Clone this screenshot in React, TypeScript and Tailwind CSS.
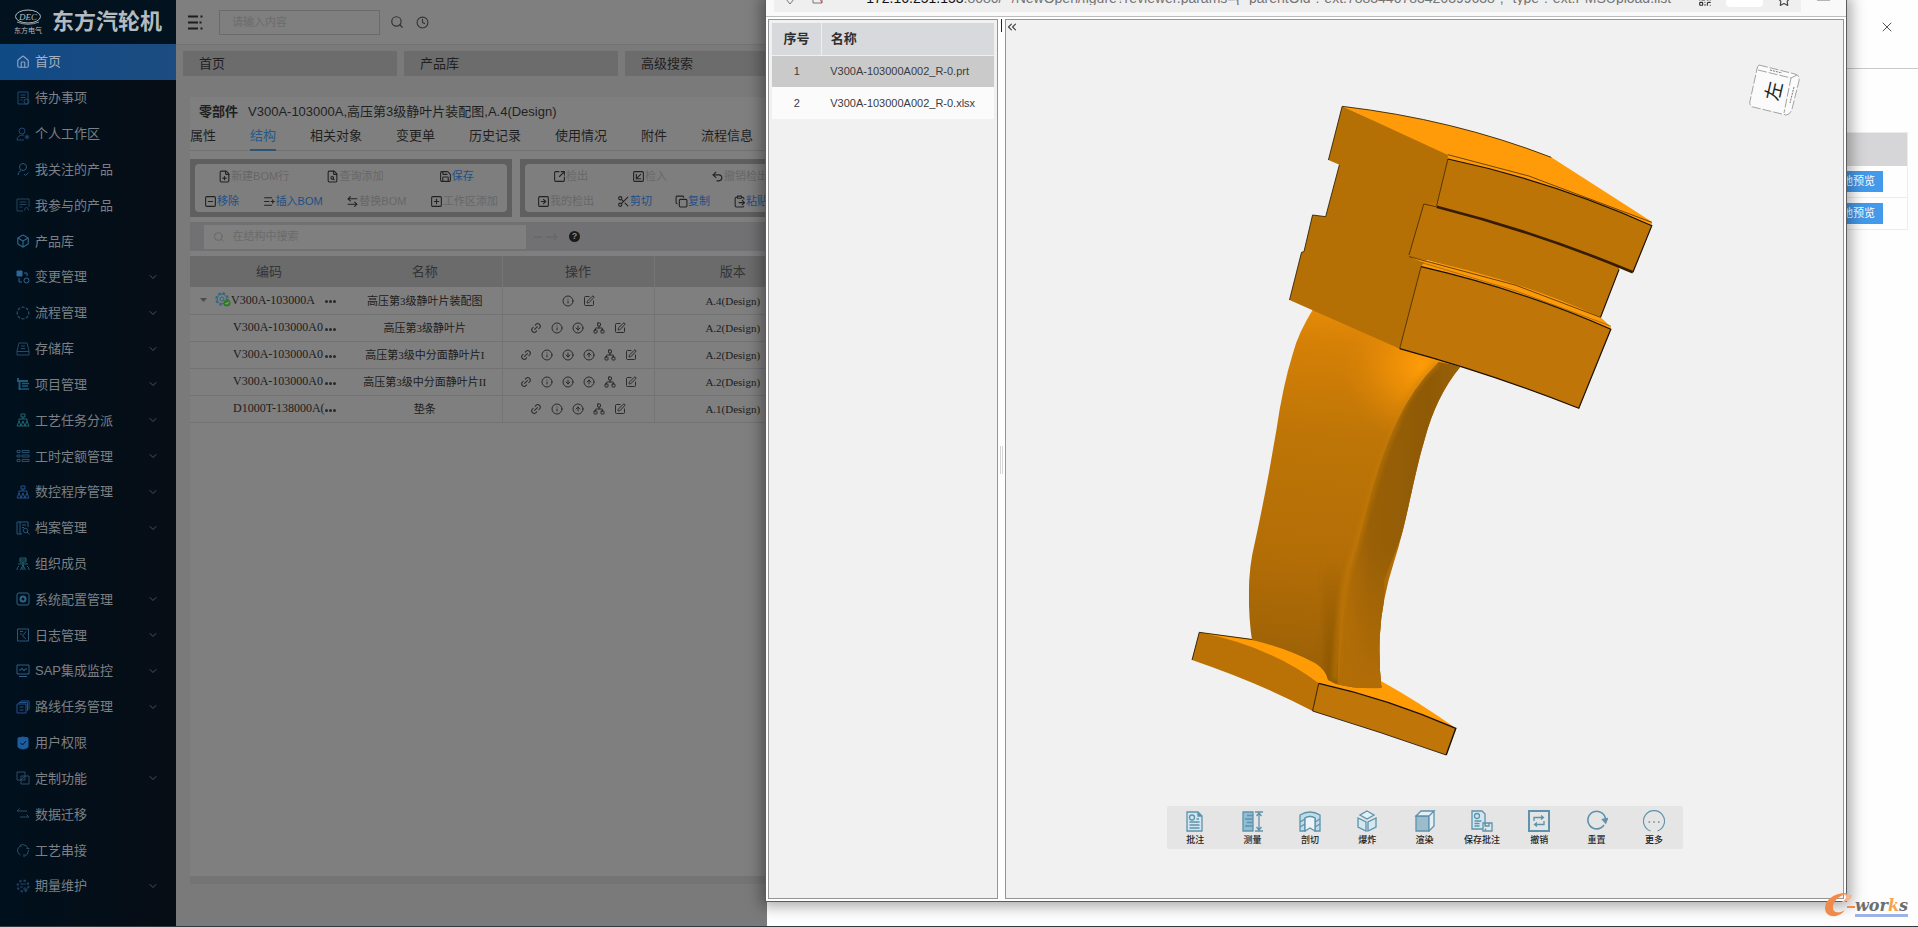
import React, { useState } from 'react';
import {
  ArrowLeftRight, Box, ChevronDown, ChevronsLeft, CircleArrowDown, CircleArrowUp, CircleDashed, ClipboardPaste,
  Clock4, Copy, FilePlus, FileSearch, House, Info, Link2, ListPlus, Network, QrCode, Save, Scissors, Search,
  SquareArrowDownLeft, SquareArrowOutUpRight, SquareArrowRight, SquareMinus, SquarePen, SquarePlus, Star, Undo2, X,
  type LucideIcon,
} from 'lucide-react';

interface MenuItem {
  label: string;
  icon?: LucideIcon;
  art?: React.ReactNode;
  tone: string;
  expandable?: boolean;
}

const orgArt = (
  <>
    <path d="M5 1h4v3H5zM7 4v2M3 8V6h8v2" />
    <path d="M3 8L1 13h4zM7 8l-2 5h4zM11 8l-2 5h4z" />
  </>
);

const menu: MenuItem[] = [
  { label: '首页', icon: House, tone: 'text-[#8aa3bd]' },
  { label: '待办事项', art: <><path d="M2 1h10v12H2zM4.500 4h5M4.500 6.500h5M4.500 9h2" /><circle cx="10.500" cy="10.500" r="2.500" /></>, tone: 'text-[#1f4d70]' },
  { label: '个人工作区', art: <><circle cx="6" cy="4" r="3" /><path d="M8 8Q1 8 1 13h7M11 7.500v5M8.500 10h5M9.500 8.500l3 3M12.500 8.500l-3 3" /></>, tone: 'text-[#23466f]' },
  { label: '我关注的产品', art: <><circle cx="7" cy="5" r="3.500" /><path d="M5 8.500Q2 10 2 13M8 12l1.500 1.500 3-3" /></>, tone: 'text-[#2c5474]' },
  { label: '我参与的产品', art: <path d="M1 1h12v8M1 1v12h6M3.500 4h7M3.500 6.500h7M3.500 9h3M8.500 12.500q0-3 2-3t2 3" />, tone: 'text-[#22425e]' },
  { label: '产品库', icon: Box, tone: 'text-[#2e6588]' },
  { label: '变更管理', art: <><path d="M1 1h5v5H1z" fill="currentColor" /><path d="M8 3h3v3M3 8v4h3" /><circle cx="10.500" cy="10.500" r="2.500" /></>, tone: 'text-[#2d6796]', expandable: true },
  { label: '流程管理', icon: CircleDashed, tone: 'text-[#2e5067]', expandable: true },
  { label: '存储库', art: <path d="M3 1h8l2 8v4H1V9zM1 9.500h12M5 4h4M5 6.500h4" />, tone: 'text-[#23496b]', expandable: true },
  { label: '项目管理', art: <><path d="M2 1v3h10M3.500 4v8h2" strokeWidth="2" /><path d="M6 6.500h7M6 9h6M6 12h7" strokeWidth="1.600" /></>, tone: 'text-[#1b5a78]', expandable: true },
  { label: '工艺任务分派', art: orgArt, tone: 'text-[#1e6672]', expandable: true },
  { label: '工时定额管理', art: <path d="M1 1.500h3v2H1zM1 6h3v2H1zM1 10.500h3v2H1zM6 1.500h7v2H6zM6 6h7v2H6zM6 10.500h7v2H6z" />, tone: 'text-[#24506c]', expandable: true },
  { label: '数控程序管理', art: orgArt, tone: 'text-[#24508c]', expandable: true },
  { label: '档案管理', art: <><path d="M1 13V1h11v5M1 13h5M4 1v12M6 4h4M6 6.500h2" /><circle cx="9.500" cy="9.500" r="2.200" /><path d="M11 11l2.500 2.500" /></>, tone: 'text-[#24587c]', expandable: true },
  { label: '组织成员', art: <path d="M4 1h6v4H4zM4 3h6M7 5v8M2 7h10M3 9Q1 10 1 13M11 9q2 1 2 4M4.500 13L7 8l2.500 5" />, tone: 'text-[#256272]' },
  { label: '系统配置管理', art: <><rect x="1" y="1" width="12" height="12" rx="2" /><circle cx="7" cy="7" r="2.500" strokeWidth="2" /></>, tone: 'text-[#2b6684]', expandable: true },
  { label: '日志管理', art: <path d="M1.500 1h11v12h-11zM4 3.500h3M4 6h2M10 3.500L6.500 8l3.500 3" />, tone: 'text-[#24587c]', expandable: true },
  { label: 'SAP集成监控', art: <path d="M1 1h12v9H1zM3 6h2l1-2 2 3 1-2h2M3 12.500h8" />, tone: 'text-[#2d5f86]', expandable: true },
  { label: '路线任务管理', art: <path d="M1 4h9v9H1zM3 4V2.500h8.500V11M5 2.500V1h8v8.500M3.500 7h4M3.500 10h4" />, tone: 'text-[#234f8c]', expandable: true },
  { label: '用户权限', art: <><path d="M2 2l5-1 5 1v9q-2 2-5 2t-5-2z" fill="currentColor" /><path d="M4.500 7l2 2 3.500-4" stroke="#06111c" /></>, tone: 'text-[#1c5ca0]' },
  { label: '定制功能', art: <path d="M1 1h8v8H1zM5 5h8v8H5zM5 9l4-4" />, tone: 'text-[#2b4d66]', expandable: true },
  { label: '数据迁移', art: <path d="M3.500 1.500L1 4h10M10.500 7.500L13 10H4" />, tone: 'text-[#2b4d66]' },
  { label: '工艺串接', art: <><path d="M4.500 12Q1 10 1.500 7T5 2.500M6 1.500q5 0 6 4M12.500 7q0 5-4 6M5 1v3M10.500 5.500h3M8 11v3" /></>, tone: 'text-[#2b4d66]' },
  { label: '期量维护', art: <><circle cx="7" cy="7" r="5.500" strokeWidth="2" strokeDasharray="2.300 2" /><path d="M4 5h6M4 8h3M9 8v4M7 10h5" /></>, tone: 'text-[#234066]', expandable: true },
];

const pageTabs = ['首页', '产品库', '高级搜索'];
const detailTabs = ['属性', '结构', '相关对象', '变更单', '历史记录', '使用情况', '附件', '流程信息'];

const actionIcons: Record<string, { icon: LucideIcon; name: string; className: string }> = {
  link: { icon: Link2, name: '关联', className: 'size-3 -rotate-45' },
  info: { icon: Info, name: '详情', className: 'size-3' },
  down: { icon: CircleArrowDown, name: '检出', className: 'size-3' },
  up: { icon: CircleArrowUp, name: '检入', className: 'size-3' },
  tree: { icon: Network, name: '结构', className: 'size-3' },
  edit: { icon: SquarePen, name: '编辑', className: 'size-3' },
};

const parts = [
  { code: 'V300A-103000A', name: '高压第3级静叶片装配图', version: 'A.4(Design)', actions: ['info', 'edit'], root: true },
  { code: 'V300A-103000A0', name: '高压第3级静叶片', version: 'A.2(Design)', actions: ['link', 'info', 'down', 'tree', 'edit'] },
  { code: 'V300A-103000A0', name: '高压第3级中分面静叶片I', version: 'A.2(Design)', actions: ['link', 'info', 'down', 'up', 'tree', 'edit'] },
  { code: 'V300A-103000A0', name: '高压第3级中分面静叶片II', version: 'A.2(Design)', actions: ['link', 'info', 'down', 'up', 'tree', 'edit'] },
  { code: 'D1000T-138000A(', name: '垫条', version: 'A.1(Design)', actions: ['link', 'info', 'up', 'tree', 'edit'] },
];

const files = ['V300A-103000A002_R-0.prt', 'V300A-103000A002_R-0.xlsx'];

const Sidebar: React.FC = () => (
  <aside className="flex w-[176px] shrink-0 flex-col bg-linear-to-r from-[#00101d] to-[#070d15] pb-[22px]">
    <div className="flex h-11 shrink-0 items-center gap-2 bg-[#02131f] pl-[14px] text-[#b4babf]">
      <svg width="30" height="26" viewBox="0 0 30 26" fill="none" stroke="currentColor">
        <ellipse cx="14" cy="7.500" rx="12.500" ry="6.500" />
        <path d="M3 13Q14 17.500 25 13" strokeWidth="0.800" />
        <text x="14" y="11" fontSize="9" fontStyle="italic" textAnchor="middle" fill="currentColor" stroke="none" fontFamily="Liberation Serif, serif">DEC</text>
        <text x="14" y="23.500" fontSize="7" textAnchor="middle" fill="currentColor" stroke="none">东方电气</text>
      </svg>
      <span className="text-[22px] leading-none font-bold whitespace-nowrap">东方汽轮机</span>
    </div>
    <nav className="flex min-h-0 flex-1 flex-col">
      {menu.map(({ label, icon: Icon, art, tone, expandable }, i) => (
        <a
          key={label}
          href="#"
          className={`flex min-h-0 flex-1 items-center pr-[17px] pl-4 text-[13px] leading-none ${
            i === 0 ? 'bg-linear-to-r from-[#0f4a86] to-[#1c4c80] text-[#a3b2c2]' : 'text-[#7c8085]'
          }`}
        >
          {Icon ? (
            <Icon className={`mr-[5px] size-[14px] shrink-0 ${tone}`} strokeWidth={2} />
          ) : (
            <svg viewBox="0 0 14 14" fill="none" stroke="currentColor" className={`mr-[5px] size-[14px] shrink-0 ${tone}`}>{art}</svg>
          )}
          <span className="flex-1 whitespace-nowrap">{label}</span>
          {expandable && <ChevronDown className="size-3 text-[#4d5258]" />}
        </a>
      ))}
    </nav>
  </aside>
);

interface ToolProps {
  icon: LucideIcon;
  label: string;
  enabled?: boolean;
}

const Tool: React.FC<ToolProps> = ({ icon: Icon, label, enabled }) => (
  <button type="button" className="flex items-center text-[11px] leading-none whitespace-nowrap">
    <Icon className="size-[13px] shrink-0 text-[#222]" strokeWidth={2} />
    <span className={enabled ? 'text-[#1d4f85]' : 'text-[#676767]'}>{label}</span>
  </button>
);

const Toolbar: React.FC = () => (
  <div className="mt-2 flex gap-2">
    <div className="w-[322px] shrink-0 border-[5px] border-[#5f5f5f] bg-[#5f5f5f]">
      <div className="flex h-12 flex-col justify-between rounded bg-[#7e7e7e] pt-[6px] pb-1">
        <div className="grid grid-cols-3 justify-items-center pl-2">
          <Tool icon={FilePlus} label="新建BOM行" />
          <Tool icon={FileSearch} label="查询添加" />
          <Tool icon={Save} label="保存" enabled />
        </div>
        <div className="flex justify-between px-[9px]">
          <Tool icon={SquareMinus} label="移除" enabled />
          <Tool icon={ListPlus} label="插入BOM" enabled />
          <Tool icon={ArrowLeftRight} label="替换BOM" />
          <Tool icon={SquarePlus} label="工作区添加" />
        </div>
      </div>
    </div>
    <div className="w-[322px] shrink-0 border-[5px] border-[#5f5f5f] bg-[#5f5f5f]">
      <div className="flex h-12 flex-col justify-between rounded bg-[#7e7e7e] pt-[6px] pb-1">
        <div className="flex gap-11 pl-7">
          <Tool icon={SquareArrowOutUpRight} label="检出" />
          <Tool icon={SquareArrowDownLeft} label="检入" />
          <Tool icon={Undo2} label="撤销检出" />
        </div>
        <div className="flex gap-[23px] pl-3">
          <Tool icon={SquareArrowRight} label="我的检出" />
          <Tool icon={Scissors} label="剪切" enabled />
          <Tool icon={Copy} label="复制" enabled />
          <Tool icon={ClipboardPaste} label="粘贴" enabled />
        </div>
      </div>
    </div>
  </div>
);

const StructureTable: React.FC = () => (
  <table className="mt-[5px] w-full table-fixed border-collapse text-center text-[11px] leading-none text-[#1c1c1c]">
    <colgroup>
      <col className="w-[158px]" />
      <col className="w-[154px]" />
      <col className="w-[152px]" />
      <col className="w-[157px]" />
      <col />
    </colgroup>
    <thead>
      <tr className="h-[31px] bg-[#6b6b6c] text-[13px] text-[#343434]">
        <th className="font-normal">编码</th>
        <th className="border-r border-[#767677] font-normal">名称</th>
        <th className="border-r border-[#767677] font-normal">操作</th>
        <th className="font-normal">版本</th>
        <th className="font-normal">状态</th>
      </tr>
    </thead>
    <tbody className="font-['Liberation_Serif','Noto_Sans_CJK_SC',serif]">
      {parts.map((part, i) => (
        <tr key={i} className="h-[27px] border-b border-[#727272]">
          <td className="pr-3">
            <div className={`flex items-center pb-px text-[12px] ${part.root ? 'pl-[10px]' : 'pl-[43px]'}`}>
              {part.root && (
                <>
                  <svg width="7" height="4" viewBox="0 0 7 4" className="mr-2 shrink-0" fill="#4c4c4c"><path d="M0 0h7L3.500 4z" /></svg>
                  <svg width="16" height="15" viewBox="0 0 16 15" className="shrink-0" fill="none">
                    <circle cx="7" cy="7" r="6" stroke="#2f6580" strokeWidth="1.500" strokeDasharray="2.600 2.100" />
                    <circle cx="7" cy="7" r="4.800" stroke="#2f6580" />
                    <circle cx="7" cy="7" r="2" stroke="#2f6580" />
                    <circle cx="12" cy="11" r="3.500" fill="#2f7a2c" />
                    <path d="M10.500 11l1.200 1.200 2-2.400" stroke="#9fb89c" />
                  </svg>
                </>
              )}
              <span className="flex-1 text-left whitespace-nowrap">{part.code}</span>
              <span className="flex w-[11px] gap-px pt-1">
                <i className="size-[3px] rounded-full bg-[#2a2a2a]" />
                <i className="size-[3px] rounded-full bg-[#2a2a2a]" />
                <i className="size-[3px] rounded-full bg-[#2a2a2a]" />
              </span>
            </div>
          </td>
          <td className="border-r border-[#747474] pt-[2px]">{part.name}</td>
          <td className="border-r border-[#747474] pt-px">
            <div className="flex justify-center gap-[9px]">
              {part.actions.map(action => {
                const { icon: Icon, name, className } = actionIcons[action];
                return (
                  <button key={action} type="button" aria-label={name}>
                    <Icon className={`text-[#2b2b2b] ${className}`} strokeWidth={2} />
                  </button>
                );
              })}
            </div>
          </td>
          <td className="pt-[2px]">{part.version}</td>
          <td />
        </tr>
      ))}
    </tbody>
  </table>
);

const Workspace: React.FC = () => {
  const [active, setActive] = useState('结构');

  return (
    <main className="flex min-w-0 flex-1 flex-col overflow-hidden bg-[#7a7a7b] pb-[42px] text-[#1f1f1f]">
      <header className="flex h-[45px] shrink-0 items-center border-b border-[#737373] bg-[#7f7f7f] pl-3">
        <svg width="15" height="15" viewBox="0 0 15 15" stroke="#1d1d1d" strokeWidth="1.800" className="mr-4">
          <path d="M0 1.500h10M0 7.500h10M0 13.500h10" />
          <path d="M12.500 1.500h2M11.500 7.500h2M12.500 13.500h2" />
        </svg>
        <input
          type="text"
          aria-label="搜索"
          placeholder="请输入内容"
          className="h-[25px] w-[161px] border border-[#6b6b6b] px-3 text-[11px] placeholder:text-[#6c6c6c]"
        />
        <Search className="ml-[10px] size-[14px] text-[#333]" strokeWidth={2} />
        <Clock4 className="ml-3 size-[13px] text-[#333]" strokeWidth={2} />
      </header>
      <div className="flex shrink-0 gap-[7px] py-[6px] pl-[7px]">
        {pageTabs.map(tab => (
          <button key={tab} type="button" className="h-[25px] w-[214px] shrink-0 bg-[#6c6c6c] pl-4 text-left text-[13px] leading-none">
            {tab}
          </button>
        ))}
      </div>
      <section className="mt-[15px] ml-[14px] flex min-h-0 flex-1 flex-col border-b-8 border-[#747474] bg-[#7f7f7f]">
        <h1 className="flex h-7 shrink-0 items-center gap-[10px] pl-[9px] text-[13px] leading-none whitespace-nowrap">
          <b>零部件</b>
          <span>V300A-103000A,高压第3级静叶片装配图,A.4(Design)</span>
        </h1>
        <div className="flex h-[26px] shrink-0 gap-[34px] border-b border-[#717171] text-[13px] leading-none">
          {detailTabs.map(tab => (
            <button
              key={tab}
              type="button"
              onClick={() => setActive(tab)}
              className={`-mb-px border-b-2 pb-[3px] whitespace-nowrap ${
                tab === active ? 'border-[#2b5676] text-[#215a8c]' : 'border-transparent'
              }`}
            >
              {tab}
            </button>
          ))}
        </div>
        <Toolbar />
        <div className="mt-[5px] flex h-[29px] shrink-0 items-center bg-[#717173] pl-[14px]">
          <label className="flex h-6 w-[322px] items-center bg-[#7f7f7f] pl-[9px]">
            <Search className="size-3 text-[#666]" />
            <input
              type="text"
              aria-label="在结构中搜索"
              placeholder="在结构中搜索"
              className="w-full px-2 text-[11px] placeholder:text-[#6b6b6b]"
            />
          </label>
          <svg width="24" height="8" viewBox="0 0 24 8" fill="none" stroke="#626264" className="ml-2">
            <path d="M0 4h8M12 4h11M20 1l3 3-3 3" />
          </svg>
          <span className="ml-[11px] flex size-[11px] items-center justify-center rounded-full bg-[#1b1b1b] text-[9px] leading-none font-bold text-[#8a8a8a]">?</span>
        </div>
        <StructureTable />
      </section>
    </main>
  );
};

const Blade: React.FC = () => (
  <svg width="549" height="690" viewBox="0 0 1594 2070" preserveAspectRatio="none" fill="none" className="mt-[60px] shrink-0">
    <defs>
      <linearGradient id="airfoil" x1="0.450" y1="0" x2="0.400" y2="1">
        <stop offset="0" stopColor="#e88c08" />
        <stop offset="0.100" stopColor="#d58006" />
        <stop offset="0.350" stopColor="#bd7506" />
        <stop offset="0.650" stopColor="#b46e06" />
        <stop offset="1" stopColor="#985f06" />
      </linearGradient>
      <radialGradient id="glow" gradientUnits="userSpaceOnUse" cx="790" cy="860" r="230">
        <stop offset="0" stopColor="#ff9c08" />
        <stop offset="0.400" stopColor="#f59407" stopOpacity="0.700" />
        <stop offset="1" stopColor="#e08706" stopOpacity="0" />
      </radialGradient>
      <linearGradient id="edge" x1="0" y1="0" x2="1" y2="0">
        <stop offset="0" stopColor="#b87107" />
        <stop offset="0.250" stopColor="#9a6007" />
        <stop offset="0.700" stopColor="#8f5a06" />
        <stop offset="1" stopColor="#9b6106" />
      </linearGradient>
      <linearGradient id="edgeFoot" x1="0" y1="0" x2="0" y2="1">
        <stop offset="0" stopColor="#b26d06" stopOpacity="0" />
        <stop offset="1" stopColor="#b26d06" />
      </linearGradient>
      <linearGradient id="crease" x1="0" y1="0" x2="0" y2="1">
        <stop offset="0" stopColor="#8c5605" stopOpacity="0" />
        <stop offset="1" stopColor="#8c5605" stopOpacity="0.800" />
      </linearGradient>
      <filter id="soft" x="-100%" y="-10%" width="300%" height="120%">
        <feGaussianBlur stdDeviation="7" />
      </filter>
      <clipPath id="airfoilClip">
        <path d="M475 685Q430 760 415 820Q385 920 367 1050L345 1180Q325 1290 304 1390Q287 1460 287 1540Q287 1620 296 1680Q400 1705 480 1750Q512 1772 517 1800L540 1812Q600 1828 672 1824Q664 1750 667 1670Q672 1560 710 1440C745 1330 765 1190 797 1080Q830 950 900 862L725 800Z" />
      </clipPath>
    </defs>

    {/* foot plate */}
    <path d="M143 1657L300 1678L480 1700L672 1804Q780 1866 888 1945L860 1960L490 1820L472 1830Z" fill="#ff9b05" />
    <path d="M143 1657Q350 1700 490 1810L472 1893Q320 1810 122 1740Z" fill="#ba7106" />
    <path d="M490 1810Q690 1856 888 1945L860 2025Q670 1956 472 1893Z" fill="#bf7507" />
    <path d="M300 1679L143 1657L122 1740M490 1810L472 1893Q670 1956 860 2025" stroke="#1a1000" strokeWidth="2.500" />
    <path d="M490 1810Q690 1856 888 1945L860 2025" stroke="#1a1000" strokeWidth="4" />

    {/* airfoil */}
    <g clipPath="url(#airfoilClip)">
      <path d="M280 680H910V1830H280Z" fill="url(#airfoil)" />
      <path d="M280 680H910V1200H280Z" fill="url(#glow)" />
      <path d="M500 1430L555 1430L545 1820L505 1800Z" fill="url(#crease)" filter="url(#soft)" />
      <path d="M838 846Q760 925 715 1030C660 1150 630 1290 600 1400C555 1530 548 1640 545 1830H680V1500L920 862Z" fill="url(#edge)" />
      <path d="M600 1400C555 1530 548 1640 545 1830H680L720 1400Z" fill="url(#edgeFoot)" />
      <path d="M835 850Q745 935 712 1040C660 1150 632 1290 598 1400C550 1540 548 1640 536 1800" stroke="#c87f08" strokeWidth="14" opacity="0.600" filter="url(#soft)" />
    </g>

    {/* root block */}
    <path d="M558 79L518 240L550 254L510 410L472 405L447 515L440 517L405 660L725 806L800 560L880 225Z" fill="#b57005" />
    <path d="M558 79Q880 118 1165 232L1457 425V437L865 245V225Z" fill="#ff9b08" />
    <path d="M795 372L865 360L1362 540V568L1308 712Q1050 610 752 525Z" fill="#bd7406" />
    <path d="M865 237Q1170 304 1457 437L1402 577Q1130 458 832 378Z" fill="#bd7406" />
    <path d="M752 530Q1050 590 1308 712L1338 740V748L1060 650L787 560L795 548Z" fill="#fc9a0a" />
    <path d="M787 560Q1080 630 1338 748L1245 985Q1000 884 725 806Z" fill="#bf7507" />
    <path d="M1165 232Q880 118 558 79L518 240M550 254L510 410L472 405L447 515L440 517L405 660" stroke="#2a1900" strokeWidth="2.500" />
    <path d="M865 224L1100 288L1457 427M865 237L832 378M830 380L795 372L752 525M752 530L1060 615L1308 712M787 560L725 806" stroke="#2a1900" strokeWidth="2" />
    <path d="M790 548L1060 632L1338 738" stroke="#6a3f02" strokeWidth="1.500" />
    <path d="M865 237Q1170 304 1457 437L1402 577M1362 568L1308 712M787 560Q1080 630 1338 748L1245 985Q1000 884 725 806" stroke="#1a1000" strokeWidth="3.500" />
    <path d="M832 380Q1130 458 1402 577" stroke="#361d00" strokeWidth="8" />
  </svg>
);

const viewerTools: { label: string; art: React.ReactNode }[] = [
  { label: '批注', art: <><path d="M3 2h11l4 4v15H3z" fill="#d3e6ef" /><path d="M14 2v4h4" fill="#5d93ac" /><circle cx="8" cy="7.500" r="2.500" /><path d="M5.500 12h10M5.500 15h10M5.500 18h10M12.500 9h2.500" /></> },
  { label: '测量', art: <><path d="M1 2h10v19H1z" fill="#8fbdd3" /><path d="M5 5.500h6M3 9h8M5 12.500h6M3 16h8M13 2h8M13 21h8M17 3v17M14.500 6L17 3l2.500 3M14.500 17l2.500 3 2.500-3" /></> },
  { label: '剖切', art: <><path d="M1 5Q11-1 21 5v16h-5V8Q11 5 6 8v13H1z" fill="#bfdce8" /><path d="M6 8v13l5-3 5 3V8Q11 5 6 8z" fill="#edf4f7" /><path d="M1 12l5-3M1 17l5-3M16 12l5-3M16 17l5-3" /></> },
  { label: '爆炸', art: <><path d="M11 1l7 4-7 4-7-4z" fill="#e2f1f6" /><path d="M2 8l8 4v9l-8-4zM20 8l-8 4v9l8-4z" fill="#d2e8f0" /></> },
  { label: '渲染', art: <><path d="M2 6h13v15H2z" fill="#9dbccb" /><path d="M2 6l5-5h13l-5 5zM20 1v15l-5 5V6z" fill="#e3f0f5" /></> },
  { label: '保存批注', art: <><path d="M1 1h10l3 3v15H1z" fill="#d3e6ef" /><circle cx="6" cy="6" r="2.500" /><path d="M3.500 11h7M3.500 13.500h5M3.500 16h5" /><path d="M12 13h9v8h-9zM14 13v3h4v-3M14.500 21v-2.500" fill="#e5e5e5" /></> },
  { label: '撤销', art: <><path d="M1 1h20v20H1z" strokeWidth="2" /><path d="M6 11V7.500h9M13 5.500l2.500 2L13 9.500M16 11v3.500H7M9 12.500l-2.500 2L9 16.500" /></> },
  { label: '重置', art: <><path d="M18 15A8.800 8.800 0 1 1 19.500 10" strokeWidth="1.600" /><path d="M16.500 9.500l3.200 3.500 1.800-4.500z" fill="#5d93ac" /></> },
  { label: '更多', art: <><path d="M7.500 21A10.500 10.500 0 1 1 14.500 21" strokeWidth="1.100" /><path d="M5.500 12h1.600M10.200 12h1.600M15 12h1.600" strokeWidth="1.600" /></> },
];

const Viewer: React.FC = () => (
  <section className="relative flex min-w-0 flex-1 flex-col items-center overflow-hidden border border-[#959595] bg-[#f1f1f1]">
    <button type="button" aria-label="收起" className="absolute top-0 -left-px">
      <ChevronsLeft className="size-[14px] text-[#444]" strokeWidth={2} />
    </button>
    <svg width="52" height="54" viewBox="0 0 52 54" className="absolute top-[43px] right-[42px]" fill="#fbfbfb" stroke="#a3a3a3" strokeDasharray="9 2">
      <path d="M10 2L46 11Q51 12 50 18L43 46Q41 52 37 52L4 44Q0 43 1 38L8 6Q8 3 10 2Z" />
      <path d="M9 7L42 15L35 50M42 15L48 12" fill="none" />
      <path d="M21 7l12 3M45 24l-4 16" fill="none" stroke="#777" strokeDasharray="2 1" />
      <text x="0" y="0" transform="translate(25 28) rotate(-77)" fontSize="19" textAnchor="middle" dominantBaseline="central" fill="#222" stroke="none">左</text>
    </svg>
    <Blade />
    <div className="mt-9 flex w-[516px] rounded-xs bg-[#e5e5e5]">
      {viewerTools.map(({ label, art }) => (
        <button key={label} type="button" className="flex h-[43px] flex-1 flex-col items-center gap-1 pt-1 text-[9px] leading-none font-medium whitespace-nowrap text-[#222]">
          <svg width="22" height="22" viewBox="0 0 22 22" fill="none" stroke="#5d93ac" strokeWidth="1.300" className="shrink-0">{art}</svg>
          {label}
        </button>
      ))}
    </div>
  </section>
);

const FileList: React.FC = () => (
  <section className="w-[230px] shrink-0 border border-[#959595] bg-[#f1f1f1] p-[3px]">
    <table className="w-full table-fixed border-collapse text-[11px] leading-none text-[#3c3c3c]">
      <thead>
        <tr className="h-8 border-b border-[#efefef] bg-[#d8d9dc] text-[13px] text-[#2f2f2f]">
          <th className="w-[49px] border-r border-[#efefef] font-bold">序号</th>
          <th className="pl-[9px] text-left font-bold">名称</th>
        </tr>
      </thead>
      <tbody>
        {files.map((file, i) => (
          <tr key={file} className={`h-8 ${i === 0 ? 'bg-[#cacaca]' : 'bg-[#fbfbfb]'}`}>
            <td className="text-center">{i + 1}</td>
            <td className="pl-[9px]">{file}</td>
          </tr>
        ))}
      </tbody>
    </table>
  </section>
);

const PreviewWindow: React.FC = () => (
  <div className="absolute top-0 right-[71px] bottom-6 left-[calc(40%-2px)] flex flex-col border-x border-b border-[#5c5c5c] bg-white shadow-[0_0_14px_4px_rgba(0,0,0,0.35)]">
    {/* address bar, scrolled mostly out of the window */}
    <div className="flex h-[17px] shrink-0 items-start overflow-hidden border-b border-[#bdbdbd] bg-[#f9f9f9] pl-2">
      <div className="-mt-4 flex h-7 min-w-0 flex-1 items-center bg-[#efeff0] pr-[10px] pl-2 text-[14px] leading-none text-[#747474]">
        <svg width="38" height="20" viewBox="0 0 38 20" fill="none" stroke="#777" className="mr-[42px] ml-1 shrink-0">
          <path d="M0 6v5l4 5 4-5V6z" />
          <path d="M27 5v10h9V5z" /><path d="M33 9l3 6" stroke="#c04a4a" />
        </svg>
        <span className="min-w-0 flex-1 overflow-hidden whitespace-nowrap">
          <span className="text-[#111]">172.16.251.153</span>
          :8080/ */NewOpen/figure?reviewer.params={'{'} "parentOid":"ext:7883440783426399638", "type":"ext:PMSUpload.list
        </span>
        <QrCode className="mt-1 mr-[14px] ml-[10px] size-[14px] shrink-0 text-[#333]" />
        <span className="mt-1 mr-[14px] h-[14px] w-[37px] shrink-0 rounded bg-white" />
        <Star className="mt-1 size-[14px] shrink-0 text-[#444]" />
      </div>
      <span className="mr-4 ml-[16px] h-px w-[13px] shrink-0 bg-[#b5b5b5]" />
    </div>
    <div className="flex min-h-0 flex-1 p-[2px]">
      <FileList />
      <div className="flex w-[7px] shrink-0 flex-col items-center">
        <span className="h-[13px] w-px bg-[#222]" />
        <span className="mt-[414px] h-7 w-[3px] border-x border-[#d5d5d5]" />
      </div>
      <Viewer />
    </div>
  </div>
);

const Drawer: React.FC = () => (
  <div className="absolute inset-y-0 right-0 w-3/5 overflow-hidden bg-[#fefefe]">
    <div className="flex h-[69px] items-center justify-end border-b border-[#c9c9c9] pr-[23px] pb-[14px]">
      <button type="button" aria-label="关闭"><X className="size-4 text-[#555]" strokeWidth={1.5} /></button>
    </div>
    <table className="mt-[63px] mr-[10px] ml-auto w-[240px] border-collapse border border-[#ececec] text-[11px] leading-none">
      <thead>
        <tr className="h-[33px] bg-[#d6d6d8]"><th aria-label="操作" /></tr>
      </thead>
      <tbody>
        {files.map(file => (
          <tr key={file} className="h-8 border-b border-[#ececec]">
            <td className="pr-6 text-right">
              <button type="button" className="h-[21px] bg-[#4399ea] px-2 text-white">本地预览</button>
            </td>
          </tr>
        ))}
      </tbody>
    </table>
  </div>
);

const Watermark: React.FC = () => (
  <div className="absolute right-[10px] bottom-[9px] flex items-end">
    <svg width="34" height="25" viewBox="0 0 34 25" fill="#f08a4b">
      <path d="M25 1C10 0 1 8 1 16C1 22 6 25 12 24C16 23 19 21 21 18C15 22 8 21 9 14C10 8 16 3 25 1Z" />
      <path d="M19 2L28 3Q28 9 16 11Q23 7 22 4Z" fill="#f6b48c" />
      <path d="M23 14h8v2h-8z" />
    </svg>
    <div className="-ml-[3px] border-b-[3px] border-[#9db2e6] font-['DejaVu_Serif',serif] text-[16px] leading-[17px] font-bold text-[#6d6d6d] italic">
      wor<span className="text-[#f6a54a]">k</span>s
    </div>
  </div>
);

const App: React.FC = () => (
  <div className="relative flex h-screen w-full overflow-hidden border-b border-[#33383d] bg-[#7a7a7b] font-['Liberation_Sans','Noto_Sans_CJK_SC',sans-serif]">
    <Sidebar />
    <Workspace />
    <Drawer />
    <PreviewWindow />
    <Watermark />
  </div>
);

export default App;
